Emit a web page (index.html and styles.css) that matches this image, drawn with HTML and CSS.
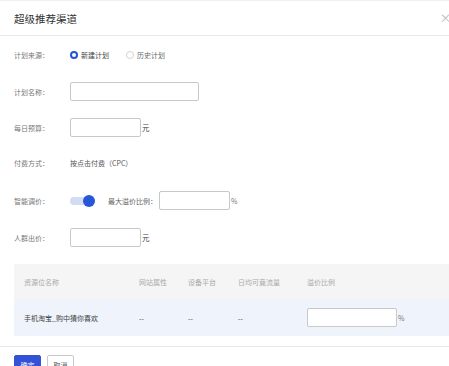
FILE: index.html
```html
<!DOCTYPE html>
<html lang="zh">
<head>
<meta charset="utf-8">
<link rel="stylesheet" href="styles.css">
</head>
<body>
<div class="modal">
  <div class="modal-header">
    <span class="title">超级推荐渠道</span>
    <span class="close">×</span>
  </div>
  <div class="form">
    <div class="row r1">
      <span class="label">计划来源：</span>
      <label class="radio checked"><span class="dot"></span>新建计划</label>
      <label class="radio"><span class="dot"></span>历史计划</label>
    </div>
    <div class="row r2">
      <span class="label">计划名称：</span>
      <span class="input wide"></span>
    </div>
    <div class="row r3">
      <span class="label">每日预算：</span>
      <span class="input"></span><span class="unit">元</span>
    </div>
    <div class="row r4">
      <span class="label">付费方式：</span>
      <span class="value">按点击付费（CPC）</span>
    </div>
    <div class="row r5">
      <span class="label">智能调价：</span>
      <span class="switch"><span class="knob"></span></span>
      <span class="label2">最大溢价比例：</span>
      <span class="input"></span><span class="unit pct">%</span>
    </div>
    <div class="row r6">
      <span class="label">人群出价：</span>
      <span class="input"></span><span class="unit">元</span>
    </div>
  </div>
  <div class="table">
    <div class="thead">
      <span class="c1">资源位名称</span>
      <span class="c2">网站属性</span>
      <span class="c3">设备平台</span>
      <span class="c4">日均可竟流量</span>
      <span class="c5">溢价比例</span>
    </div>
    <div class="tbody">
      <span class="c1">手机淘宝_购中猜你喜欢</span>
      <span class="c2">--</span>
      <span class="c3">--</span>
      <span class="c4">--</span>
      <span class="c5"><span class="input tinput"></span><span class="unit pct">%</span></span>
    </div>
  </div>
  <div class="footer">
    <button class="btn primary">确定</button>
    <button class="btn">取消</button>
  </div>
</div>
</body>
</html>
```
FILE: styles.css
```css
html, body {
  margin: 0;
  padding: 0;
  overflow: hidden;
  background: #fff;
}
body {
  width: 449px;
  height: 366px;
  font-family: "Noto Sans CJK SC", "Noto Sans", sans-serif;
  color: #333;
}
.modal {
  width: 470px;
  border-top: 1px solid #f0f0f0;
}
.modal-header {
  height: 34px;
  border-bottom: 1px solid #e8e8e8;
  display: flex;
  align-items: center;
  justify-content: space-between;
  padding: 0 0 0 14px;
}
.title {
  font-size: 10.5px;
  color: #333;
  line-height: 14px;
  margin-top: 1px;
}
.close {
  font-size: 12px;
  color: #bbb;
  width: 21px;
  text-align: center;
  margin-right: 14px;
  line-height: 12px;
}
.form {
  padding: 9px 0 0 14px;
  display: flex;
  flex-direction: column;
}
.row {
  display: flex;
  align-items: center;
  height: 19px;
  font-size: 7px;
}
.r2 { margin-top: 18px; }
.r3 { margin-top: 17px; }
.r4 { margin-top: 16px; }
.r5 { margin-top: 19px; }
.r6 { margin-top: 18px; }
.label {
  width: 56px;
  color: #777;
}
.label2 {
  color: #666;
  margin: 0 2px 0 13px;
}
.value {
  color: #555;
}
.radio {
  display: flex;
  align-items: center;
  color: #444;
  margin-right: 17px;
}
.radio .dot {
  box-sizing: border-box;
  width: 8px;
  height: 8px;
  border-radius: 50%;
  border: 1px solid #d4d4d4;
  margin-right: 3px;
  background: #fff;
}
.radio.checked .dot {
  border: 2.3px solid #2453d6;
}
.radio:not(.checked) { color: #666; }
.input {
  box-sizing: border-box;
  display: inline-block;
  width: 71px;
  height: 19px;
  border: 1px solid #c8c8c8;
  border-radius: 2px;
  background: #fff;
}
.input.wide { width: 129px; }
.unit {
  font-size: 7.5px;
  color: #444;
  margin-left: 1px;
}
.unit.pct {
  font-size: 7px;
  color: #777;
}
.switch {
  position: relative;
  width: 21px;
  height: 8px;
  border-radius: 4px;
  background: #d2dcf4;
  margin-right: 4px;
}
.knob {
  position: absolute;
  right: -4px;
  top: -2px;
  width: 12px;
  height: 12px;
  border-radius: 50%;
  background: #2557d6;
}
.table {
  margin: 17px 0 0 14px;
  font-size: 7px;
}
.thead, .tbody {
  display: grid;
  grid-template-columns: 115px 49px 50px 69px 1fr;
  align-items: center;
}
.thead {
  height: 35px;
  background: #f5f5f5;
  color: #aaa;
}
.tbody {
  height: 37px;
  background: #eef3fc;
  color: #444;
}
.thead > span, .tbody > span {
  padding-left: 10px;
}
.c5 {
  display: flex;
  align-items: center;
}
.tinput { width: 90px; }
.footer {
  margin-top: 10px;
  border-top: 1px solid #e8e8e8;
  padding: 8px 0 0 14px;
  display: flex;
  gap: 6px;
}
.btn {
  box-sizing: border-box;
  height: 20px;
  width: 27px;
  padding: 0;
  font-family: inherit;
  font-size: 7px;
  border: 1px solid #c9c9c9;
  border-radius: 2px;
  background: #fff;
  color: #555;
}
.btn.primary {
  background: #3352d8;
  border-color: #3352d8;
  color: #fff;
}
```
